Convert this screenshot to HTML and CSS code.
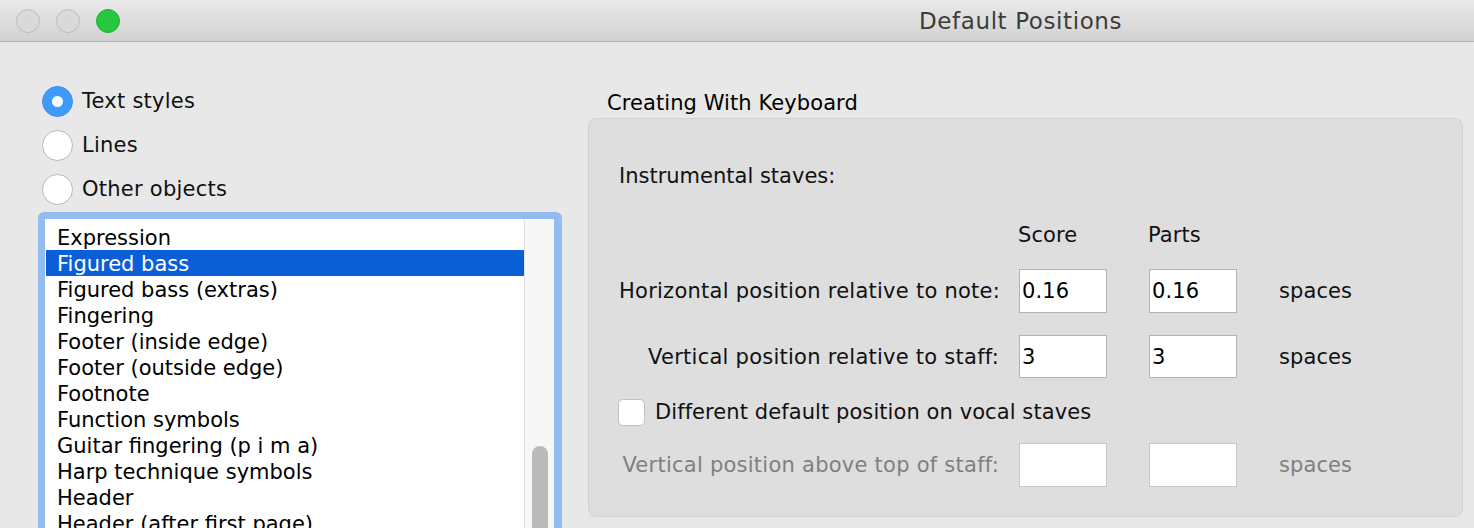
FILE: index.html
```html
<!DOCTYPE html>
<html>
<head>
<meta charset="utf-8">
<link rel="stylesheet" href="styles.css">
</head>
<body>
<div class="titlebar">
  <div class="lights">
    <span class="light grey"></span>
    <span class="light grey"></span>
    <span class="light green"></span>
  </div>
  <div class="title">Default Positions</div>
</div>
<div class="main">
  <div class="left">
    <div class="radio-row"><span class="radio on"></span><span>Text styles</span></div>
    <div class="radio-row"><span class="radio"></span><span>Lines</span></div>
    <div class="radio-row"><span class="radio"></span><span>Other objects</span></div>
    <div class="listframe">
      <div class="list">
        <div class="items">
          <div class="item">Expression</div>
          <div class="item sel">Figured bass</div>
          <div class="item">Figured bass (extras)</div>
          <div class="item">Fingering</div>
          <div class="item">Footer (inside edge)</div>
          <div class="item">Footer (outside edge)</div>
          <div class="item">Footnote</div>
          <div class="item">Function symbols</div>
          <div class="item">Guitar fingering (p i m a)</div>
          <div class="item">Harp technique symbols</div>
          <div class="item">Header</div>
          <div class="item">Header (after first page)</div>
        </div>
        <div class="track"><div class="thumb"></div></div>
      </div>
    </div>
  </div>
  <div class="right">
    <div class="group-label">Creating With Keyboard</div>
    <div class="group">
      <div class="heading">Instrumental staves:</div>
      <div class="row head">
        <span class="lbl"></span>
        <span class="col first">Score</span>
        <span class="col">Parts</span>
      </div>
      <div class="row r1">
        <span class="lbl">Horizontal position relative to note:</span>
        <span class="field first">0.16</span>
        <span class="field">0.16</span>
        <span class="unit">spaces</span>
      </div>
      <div class="row r2">
        <span class="lbl">Vertical position relative to staff:</span>
        <span class="field first">3</span>
        <span class="field">3</span>
        <span class="unit">spaces</span>
      </div>
      <div class="check-row">
        <span class="checkbox"></span>
        <span>Different default position on vocal staves</span>
      </div>
      <div class="row r4 disabled">
        <span class="lbl">Vertical position above top of staff:</span>
        <span class="field first"></span>
        <span class="field"></span>
        <span class="unit">spaces</span>
      </div>
    </div>
  </div>
</div>
</body>
</html>
```
FILE: styles.css
```css
html, body {
  margin: 0;
  padding: 0;
}
body {
  width: 1474px;
  height: 528px;
  overflow: hidden;
  background: #e8e8e8;
  font-family: "DejaVu Sans", "Liberation Sans", sans-serif;
  font-size: 21px;
  letter-spacing: 0.08px;
  color: #111;
}
.titlebar {
  height: 41px;
  border-bottom: 1px solid #b3b3b3;
  background: linear-gradient(#e9e9e9, #d2d2d2);
  display: flex;
  align-items: center;
}
.lights {
  display: flex;
  gap: 16px;
  padding-left: 16px;
}
.light {
  width: 22px;
  height: 22px;
  border-radius: 50%;
  border: 1px solid #bdbdbd;
  background: #d9d9d9;
}
.light.green {
  background: #27c840;
  border-color: #22b236;
}
.title {
  margin-left: 799px;
  font-size: 23px;
  letter-spacing: 0.6px;
  color: #3c3c3c;
}
.main {
  display: flex;
}
.left {
  width: 524px;
  margin-left: 38px;
  padding-top: 37px;
}
.radio-row {
  height: 44px;
  display: flex;
  align-items: center;
  padding-left: 4px;
  gap: 9px;
  letter-spacing: 0.25px;
}
.radio {
  width: 29px;
  height: 29px;
  border-radius: 50%;
  border: 1px solid #b8b8b8;
  background: #fff;
  box-sizing: content-box;
  display: flex;
  align-items: center;
  justify-content: center;
}
.radio.on {
  background: #3f9bfb;
  border-color: #3a8ff0;
}
.radio.on::after {
  content: "";
  width: 11px;
  height: 11px;
  border-radius: 50%;
  background: #fff;
}
.listframe {
  background: #93bcf0;
  border-radius: 6px 6px 0 0;
  padding: 7px 8px 0 7px;
  height: 310px;
  margin-top: 1px;
}
.list {
  background: #fff;
  display: flex;
  height: 100%;
}
.items {
  width: 479px;
  padding-top: 5px;
  overflow: hidden;
  letter-spacing: 0;
}
.item {
  height: 26px;
  line-height: 28px;
  padding-left: 12px;
  white-space: nowrap;
  color: #000;
}
.item.sel {
  background: #0a5fd7;
  color: #fff;
  margin-left: 1px;
  padding-left: 11px;
}
.track {
  flex: 1;
  background: #f7f7f7;
  border-left: 1px solid #e3e3e3;
  padding-top: 227px;
  display: flex;
  justify-content: center;
}
.thumb {
  width: 16px;
  height: 200px;
  border-radius: 8px;
  background: #bbbbbb;
}
.right {
  margin-left: 26px;
  width: 875px;
  padding-top: 48px;
}
.group-label {
  height: 26px;
  line-height: 26px;
  padding-left: 19px;
  margin-bottom: 2px;
  color: #000;
}
.group {
  height: 399px;
  box-sizing: border-box;
  background: #dedede;
  border: 1px solid #d2d2d2;
  border-radius: 8px;
  padding: 44px 0 0 30px;
}
.heading {
  height: 26px;
  line-height: 26px;
  margin-bottom: 33px;
  letter-spacing: 0;
}
.row {
  display: flex;
  align-items: center;
}
.row.head {
  height: 26px;
  margin-bottom: 21px;
}
.row.r1 {
  height: 44px;
  margin-bottom: 22px;
}
.row.r2 {
  height: 43px;
  margin-bottom: 20px;
}
.row.r4 {
  height: 44px;
}
.lbl {
  width: 380px;
  text-align: right;
  white-space: nowrap;
  letter-spacing: 0.25px;
}
.col {
  width: 88px;
  margin-left: 42px;
}
.col.first {
  margin-left: 19px;
}
.field {
  width: 88px;
  height: 100%;
  box-sizing: border-box;
  background: #fff;
  border: 1px solid #b3b3b3;
  margin-left: 42px;
  padding-left: 2px;
  display: flex;
  align-items: center;
  color: #000;
}
.field.first {
  margin-left: 20px;
}
.unit {
  margin-left: 42px;
}
.check-row {
  height: 28px;
  display: flex;
  align-items: center;
  gap: 10px;
  margin-left: -1px;
  margin-bottom: 17px;
}
.checkbox {
  width: 25px;
  height: 25px;
  background: #fff;
  border: 1px solid #c2c2c2;
  border-radius: 5px;
}
.disabled .lbl,
.disabled .unit {
  color: #808080;
}
.disabled .field {
  border-color: #c6c6c6;
}
```
